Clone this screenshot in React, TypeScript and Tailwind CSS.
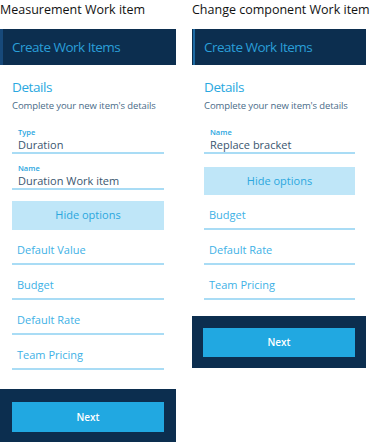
const font = { fontFamily: '"Open Sans", "Noto Sans", sans-serif' };

function Field({ label, value }: { label: string; value: string }) {
  return (
    <div className="border-b-2 border-[#a9dcf5] pl-[6px]">
      <div className="text-[7.5px] leading-[10px] font-semibold text-[#2ba6e0]">{label}</div>
      <div className="text-[11px] leading-[15px] text-[#3a566f]">{value}</div>
    </div>
  );
}

function Row({ label }: { label: string }) {
  return (
    <div className="h-[35px] border-b-2 border-[#a9dcf5] pt-[12px] pl-[5px] text-[11px] leading-[16px] text-[#40b1e6]">
      {label}
    </div>
  );
}

function Intro() {
  return (
    <div className="pt-[10px]">
      <div className="text-[13.5px] leading-[24px] tracking-[-0.4px] text-[#2aa8e0]">Details</div>
      <div className="text-[9.5px] leading-[14px] tracking-[-0.1px] text-[#4a6b88]">Complete your new item's details</div>
    </div>
  );
}

function HideOptions({ className }: { className: string }) {
  return (
    <div className={`flex items-center justify-center bg-[#bfe6f8] text-[11px] text-[#2ba6de] ${className}`}>
      Hide options
    </div>
  );
}

function Footer({ className }: { className: string }) {
  return (
    <div className={`bg-[#0c2e4f] ${className}`}>
      <button className="flex h-full w-full items-center justify-center bg-[#21a8e1] text-[10px] font-semibold text-white">
        Next
      </button>
    </div>
  );
}

export default function App() {
  return (
    <div className="flex h-[442px] w-[370px] gap-[16px] overflow-hidden bg-white" style={font}>
      <div className="flex w-[176px] shrink-0 flex-col">
        <div className="h-[29px] whitespace-nowrap text-[12.5px] leading-[20px] text-[#111]">Measurement Work item</div>
        <div className="flex h-[36px] items-center bg-[#0c2e4f]">
          <div className="h-full w-[3px] bg-[#17497a]" />
          <span className="pl-[9px] text-[13.5px] tracking-[-0.5px] text-[#2a9fd8]">Create Work Items</span>
        </div>
        <div className="px-[12px]">
          <Intro />
          <div className="mt-[14px]">
            <Field label="Type" value="Duration" />
          </div>
          <div className="mt-[9px]">
            <Field label="Name" value="Duration Work item" />
          </div>
          <HideOptions className="mt-[11px] h-[29px]" />
          <Row label="Default Value" />
          <Row label="Budget" />
          <Row label="Default Rate" />
          <Row label="Team Pricing" />
        </div>
        <div className="mt-[19px]">
          <Footer className="h-[53px] px-[12px] pt-[13px] pb-[10px]" />
        </div>
      </div>
      <div className="flex w-[174px] shrink-0 flex-col">
        <div className="h-[29px] whitespace-nowrap text-[12.5px] leading-[20px] text-[#111]">Change component Work item</div>
        <div className="flex h-[36px] items-center bg-[#0c2e4f]">
          <div className="ml-[1px] h-full w-[2px] bg-[#1d6aa3]" />
          <span className="pl-[9px] text-[13.5px] tracking-[-0.5px] text-[#2a9fd8]">Create Work Items</span>
        </div>
        <div className="pl-[12px] pr-[11px]">
          <Intro />
          <div className="mt-[14px]">
            <Field label="Name" value="Replace bracket" />
          </div>
          <HideOptions className="mt-[13px] h-[28px]" />
          <Row label="Budget" />
          <Row label="Default Rate" />
          <Row label="Team Pricing" />
        </div>
        <div className="mt-[16px]">
          <Footer className="h-[52px] px-[11px] pt-[12px] pb-[11px]" />
        </div>
      </div>
    </div>
  );
}
